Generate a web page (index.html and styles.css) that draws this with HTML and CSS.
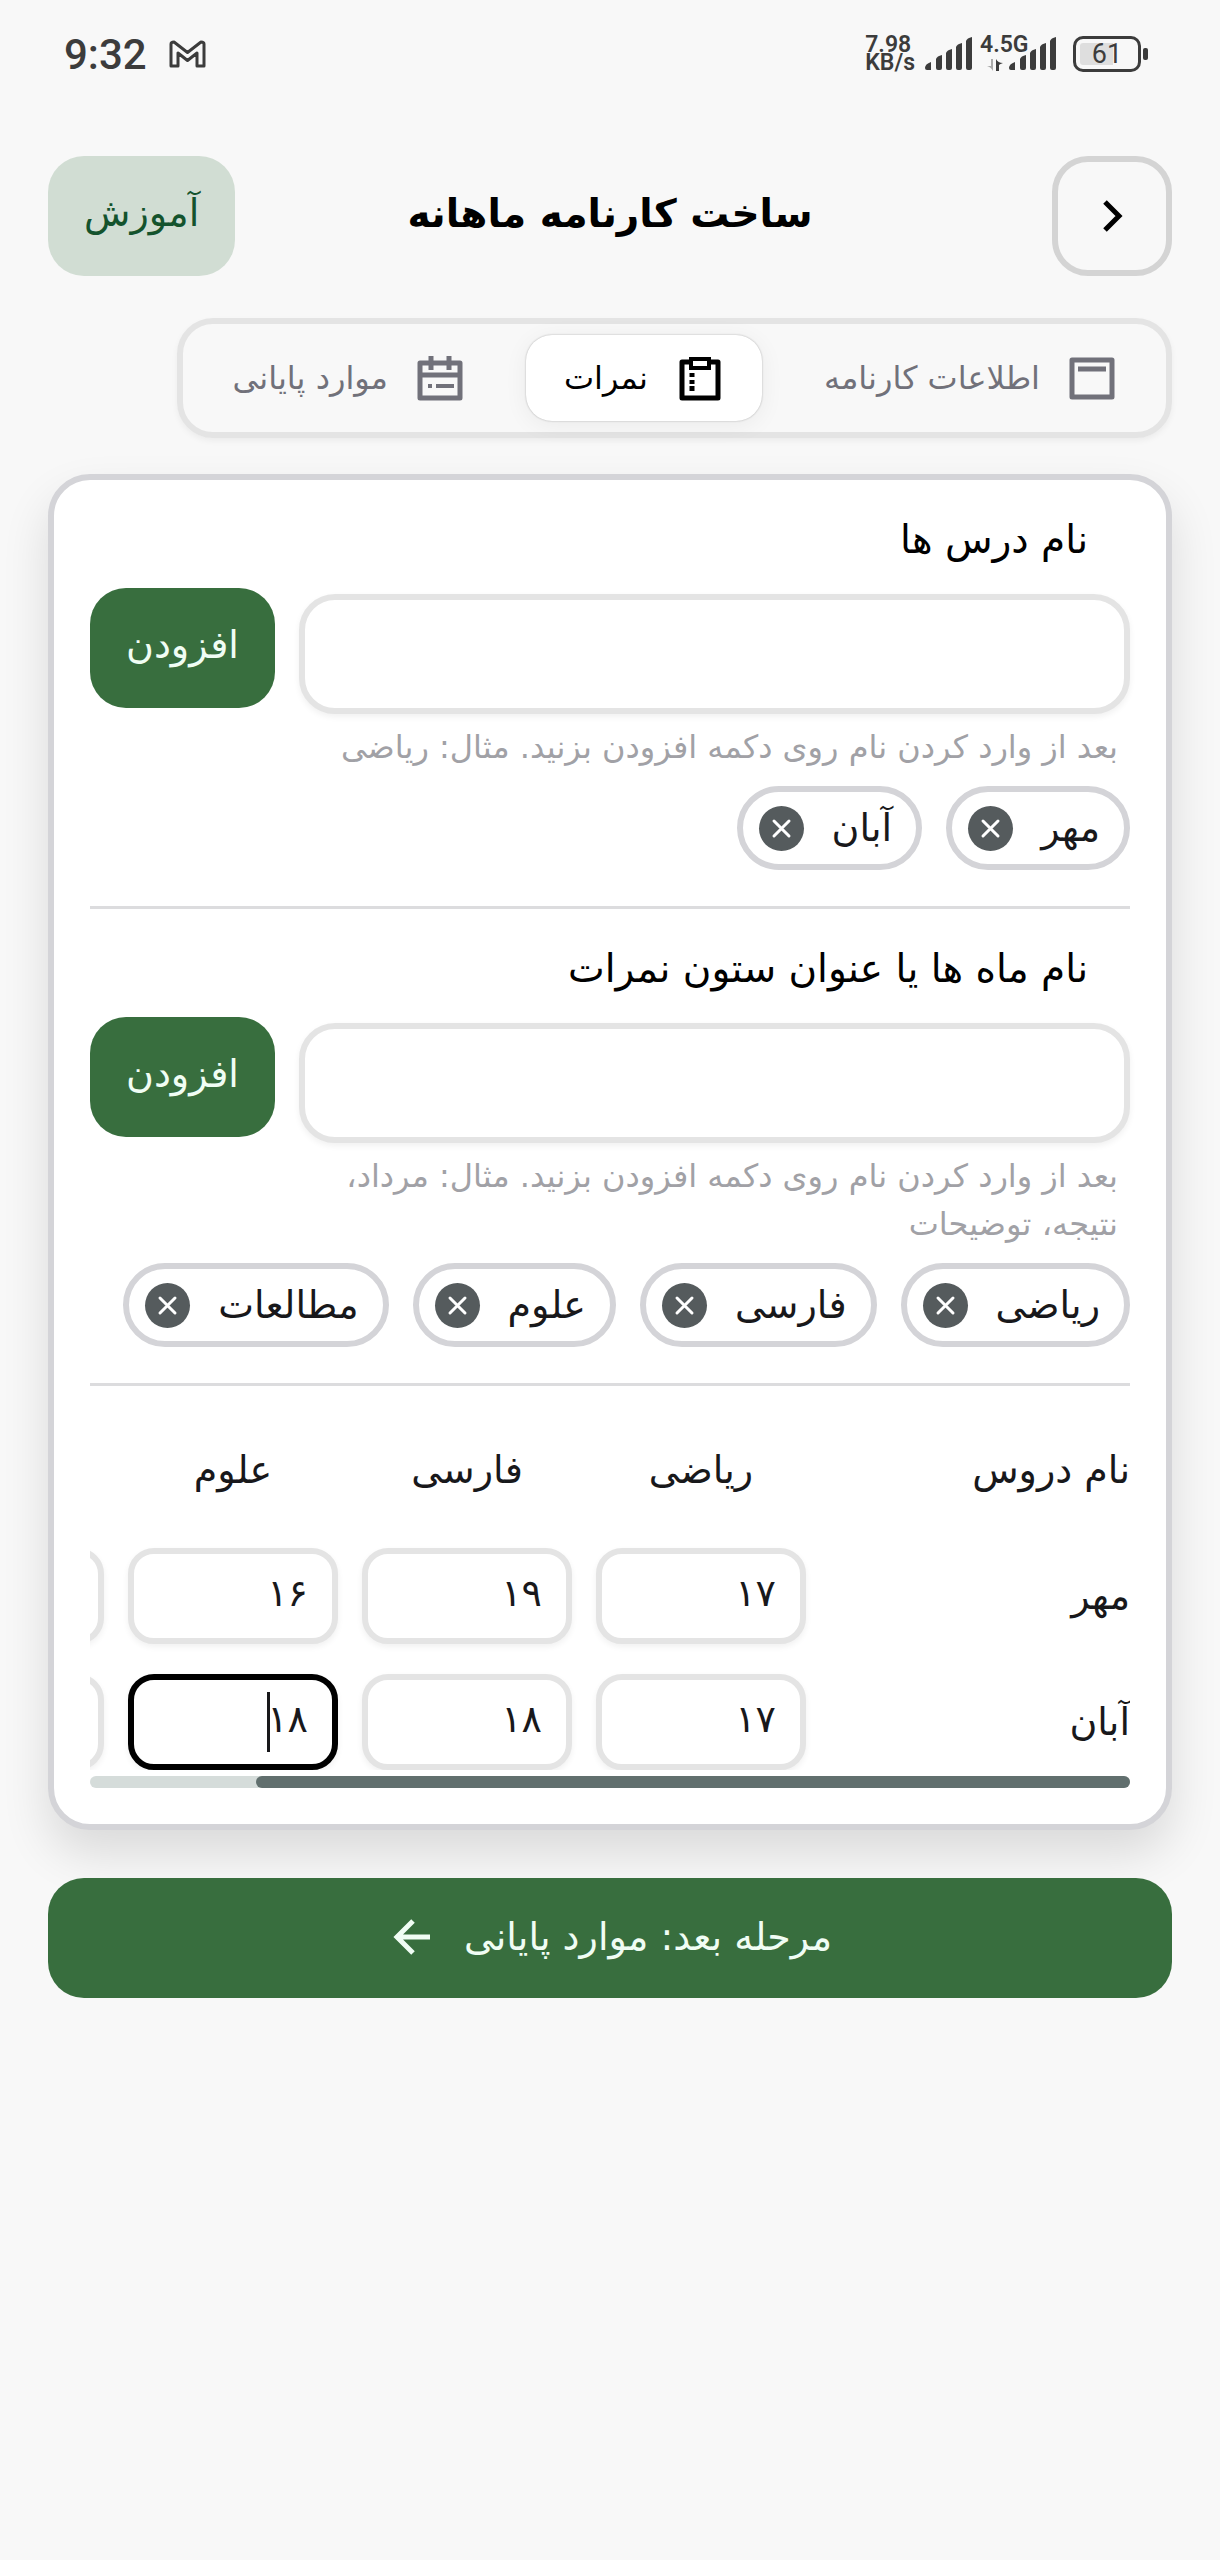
FILE: index.html
```html
<!DOCTYPE html>
<html lang="fa" dir="rtl">
<head>
    <meta charset="UTF-8">
    <meta name="viewport" content="width=device-width, initial-scale=1.0">
    <title>ساخت کارنامه ماهانه</title>
    <link rel="stylesheet" href="styles.css">
</head>
<body>
    <div class="status-bar" dir="ltr">
        <div class="status-left">
            <span class="clock">9:32</span>
            <svg class="mail-icon" viewBox="0 0 37 28" fill="none" stroke="#3c3c3c" stroke-width="3" stroke-linejoin="round">
                <path d="M2 4Q2 2 5 2L18.500 12.500 32 2Q35 2 35 4V26H28V13L18.500 20.500 9 13V26H2Z"/>
            </svg>
        </div>
        <div class="status-right">
            <div class="net-speed"><span>7.98</span><span>KB/s</span></div>
            <svg class="signal" viewBox="0 0 50 34" fill="#3c3c3c">
                <path d="M1 31q0-4 6-6v8H3q-2 0-2-2zM12 22q1-3 6-4v13q0 2-2 2h-2q-2 0-2-2zM22 16q1-3 6-4v19q0 2-2 2h-2q-2 0-2-2zM32 10q1-3 6-4v25q0 2-2 2h-2q-2 0-2-2zM42 4q1-3 6-4v31q0 2-2 2h-2q-2 0-2-2z"/>
            </svg>
            <div class="mobile-net">
                <span>4.5G</span>
                <svg class="data-arrows" viewBox="0 0 18 14"><path d="M7 1v12Q5 9 1 8h4V1z" fill="#aaa"/><path d="M10 13V1q2 4 7 4-3 1-4 2v6z" fill="#3c3c3c"/></svg>
            </div>
            <svg class="signal signal-data" viewBox="0 0 50 34" fill="#3c3c3c">
                <path d="M1 31q0-4 6-6v8H3q-2 0-2-2zM12 22q1-3 6-4v13q0 2-2 2h-2q-2 0-2-2zM22 16q1-3 6-4v19q0 2-2 2h-2q-2 0-2-2zM32 10q1-3 6-4v25q0 2-2 2h-2q-2 0-2-2zM42 4q1-3 6-4v31q0 2-2 2h-2q-2 0-2-2z"/>
            </svg>
            <div class="battery"><span>61</span></div>
        </div>
    </div>

    <header class="top-bar">
        <button class="back-btn" aria-label="بازگشت">
            <svg viewBox="0 0 48 48" fill="none" stroke="#000" stroke-width="5"><path d="M17 10l14 14-14 14"/></svg>
        </button>
        <h1>ساخت کارنامه ماهانه</h1>
        <button class="help-btn">آموزش</button>
    </header>

    <nav class="tabs">
        <button class="tab">
            <svg viewBox="0 0 48 48" fill="none" stroke="currentColor" stroke-width="5" stroke-linejoin="round"><path d="M4 6h40v37H4zM10 15h28"/></svg>
            اطلاعات کارنامه
        </button>
        <button class="tab active">
            <svg viewBox="0 0 48 48" fill="none" stroke="currentColor" stroke-width="5" stroke-linejoin="round">
                <path d="M14 8H6v36h36V8H34"/>
                <path d="M15 5h18v9H15z" stroke-width="4" stroke-linejoin="miter"/>
                <path d="M16 19v4M16 26v4M16 32v5"/>
            </svg>
            نمرات
        </button>
        <button class="tab">
            <svg viewBox="0 0 48 48" fill="none" stroke="currentColor" stroke-width="5" stroke-linejoin="round">
                <path d="M4 9h40v35H4zM4 21h40"/>
                <path d="M15 2v14M33 2v14"/>
                <path d="M12 32h4M20 32h18" stroke-width="4"/>
            </svg>
            موارد پایانی
        </button>
    </nav>

    <main class="card">
        <section class="group">
            <div class="entry">
                <label for="lesson">نام درس ها</label>
                <input class="name-input" type="text" id="lesson">
                <button class="add-btn">افزودن</button>
            </div>
            <p class="hint">بعد از وارد کردن نام روی دکمه افزودن بزنید. مثال: ریاضی</p>
            <div class="chips" id="lesson-chips"></div>
        </section>

        <section class="group">
            <div class="entry">
                <label for="month">نام ماه ها یا عنوان ستون نمرات</label>
                <input class="name-input" type="text" id="month">
                <button class="add-btn">افزودن</button>
            </div>
            <p class="hint">بعد از وارد کردن نام روی دکمه افزودن بزنید. مثال: مرداد، نتیجه، توضیحات</p>
            <div class="chips" id="column-chips"></div>
        </section>

        <div class="table-scroll">
            <table>
                <thead>
                    <tr id="head-row"><th class="row-name">نام دروس</th></tr>
                </thead>
                <tbody id="grades"></tbody>
            </table>
        </div>
        <div class="scrollbar"><div class="thumb"></div></div>
    </main>

    <button class="next-btn">
        مرحله بعد: موارد پایانی
        <svg viewBox="0 0 48 48" fill="none" stroke="currentColor" stroke-width="5"><path d="M42 24H9M25 8L9 24l16 16"/></svg>
    </button>

    <script src="script.js"></script>
</body>
</html>
```
FILE: styles.css
```css
* {
    margin: 0;
    padding: 0;
    box-sizing: border-box;
}

body {
    background: #f8f8f8;
    min-height: 100vh;
    padding: 0 48px 48px;
    color: #000;
    font-family: 'DejaVu Sans', sans-serif;
    font-size: 38px;
}

button,
input {
    font: inherit;
    color: inherit;
}

button {
    border: none;
    cursor: pointer;
}

svg {
    display: block;
    flex-shrink: 0;
}

/* phone status bar */
.status-bar {
    display: flex;
    justify-content: space-between;
    align-items: center;
    height: 108px;
    padding: 0 31px 0 16px;
    font-family: Roboto, sans-serif;
    color: #3c3c3c;
}

.status-left,
.status-right {
    display: flex;
    align-items: center;
}

.clock {
    font-size: 42px;
    font-weight: 500;
}

.mail-icon {
    width: 37px;
    height: 28px;
    margin-left: 22px;
}

.net-speed {
    display: flex;
    flex-direction: column;
    font-size: 23px;
    line-height: 18px;
    font-weight: 600;
}

.signal {
    width: 50px;
    height: 34px;
    margin-left: 9px;
}

.mobile-net {
    margin-left: 6px;
    height: 36px;
    width: 28px;
    font-size: 23px;
    line-height: 18px;
    font-weight: 600;
}

.data-arrows {
    width: 18px;
    height: 14px;
    margin: 4px 0 0 6px;
}

.signal-data {
    margin-left: 0;
}

.battery {
    position: relative;
    width: 68px;
    height: 36px;
    margin-left: 15px;
    border: 3px solid #3c3c3c;
    border-radius: 10px;
    background: linear-gradient(to right, #dedede 60%, #f8f8f8 60%);
    box-shadow: inset 0 0 0 4px #f8f8f8;
    font-size: 27px;
    line-height: 31px;
    text-align: center;
}

.battery::after {
    content: '';
    position: absolute;
    right: -10px;
    top: 9px;
    width: 5px;
    height: 12px;
    border-radius: 2px;
    background: #3c3c3c;
}

.top-bar {
    display: grid;
    grid-template-columns: 1fr auto 1fr;
    align-items: center;
    margin-top: 48px;
}

h1 {
    padding-bottom: 6px;
    font-size: 39px;
    font-weight: bold;
}

.back-btn {
    display: flex;
    justify-content: center;
    align-items: center;
    width: 120px;
    height: 120px;
    border: 6px solid #d4d4d4;
    border-radius: 36px;
    background: none;
}

.back-btn svg,
.tab svg,
.next-btn svg {
    width: 48px;
    height: 48px;
}

.help-btn,
.add-btn {
    height: 120px;
    padding: 0 36px 6px;
    border-radius: 36px;
}

.help-btn {
    justify-self: end;
    background: #d1ddd3;
    color: #14532d;
}

.add-btn {
    background: #386e3e;
    color: #f0fdf4;
}

.tabs {
    display: flex;
    align-items: center;
    gap: 24px;
    width: fit-content;
    height: 120px;
    margin-top: 42px;
    padding: 0 12px;
    border: 6px solid #e4e4e4;
    border-radius: 36px;
    box-shadow: 0 3px 6px rgba(0, 0, 0, 0.05);
}

.tab {
    display: flex;
    align-items: center;
    gap: 28px;
    height: 86px;
    padding: 0 38px;
    border-radius: 26px;
    background: none;
    color: #71717a;
    font-size: 32px;
    white-space: nowrap;
}

.tab.active {
    background: #fff;
    color: #000;
    box-shadow: 0 0 2px rgba(0, 0, 0, 0.3), 0 4px 24px rgba(0, 0, 0, 0.06);
}

.card {
    margin-top: 36px;
    padding: 36px;
    border: 6px solid #d4d4d8;
    border-radius: 42px;
    background: #fff;
    box-shadow: 0 24px 48px rgba(0, 0, 0, 0.12);
}

.group {
    padding-bottom: 36px;
    margin-bottom: 36px;
    border-bottom: 3px solid #dcdcde;
}

.entry {
    display: grid;
    grid-template-columns: 1fr auto;
    column-gap: 24px;
}

.entry label {
    grid-column: 1 / -1;
    height: 72px;
    padding-right: 42px;
    font-size: 39px;
    line-height: 48px;
}

.name-input {
    width: 100%;
    height: 120px;
    margin-top: 6px;
    padding: 0 36px;
    border: 6px solid #e4e4e4;
    border-radius: 36px;
    background: #fff;
    box-shadow: 0 3px 6px rgba(0, 0, 0, 0.06);
}

.hint {
    max-width: 828px;
    margin-top: 9px;
    padding-right: 12px;
    color: #a1a1a6;
    font-size: 32px;
    line-height: 48px;
}

.chips {
    display: flex;
    flex-wrap: wrap;
    gap: 24px;
    margin-top: 15px;
}

.chip {
    display: flex;
    align-items: center;
    gap: 28px;
    height: 84px;
    padding: 0 24px 0 16px;
    border: 6px solid #d4d4d8;
    border-radius: 42px;
    color: #18181b;
}

.chip button {
    width: 45px;
    height: 45px;
    border-radius: 50%;
    background: #555b5d;
}

.chip svg {
    width: 45px;
    height: 45px;
}

.table-scroll {
    overflow-x: auto;
    scrollbar-width: none;
}

table {
    width: 1236px;
    table-layout: fixed;
    border-collapse: collapse;
    color: #18181b;
}

th {
    height: 96px;
    padding-right: 24px;
    font-weight: normal;
}

th.row-name,
td.row-name {
    width: 300px;
    padding-right: 0;
    text-align: right;
}

td {
    padding: 30px 24px 0 0;
}

.cell {
    position: relative;
}

.grade {
    display: block;
    width: 100%;
    height: 96px;
    padding: 0 24px 6px;
    border: 6px solid #e4e4e4;
    border-radius: 26px;
    background: #fff;
    box-shadow: 0 3px 6px rgba(0, 0, 0, 0.06);
}

.grade.editing {
    border-color: #000;
    outline: none;
    caret-color: transparent;
}

.caret {
    position: absolute;
    top: 18px;
    right: 68px;
    width: 3px;
    height: 60px;
    background: #18181b;
}

.scrollbar {
    height: 12px;
    margin-top: 6px;
    border-radius: 6px;
    background: #d5dcda;
}

.thumb {
    width: 84%;
    height: 12px;
    border-radius: 6px;
    background: #616f6e;
}

.next-btn {
    display: flex;
    justify-content: center;
    align-items: center;
    gap: 28px;
    width: 100%;
    height: 120px;
    margin-top: 48px;
    padding-bottom: 3px;
    border-radius: 36px;
    background: #386e3e;
    color: #f0fdf4;
    position: relative;
}
```
FILE: script.js
```js
const rows = ['مهر', 'آبان'];
const columns = ['ریاضی', 'فارسی', 'علوم', 'مطالعات'];
const grades = [
    ['۱۷', '۱۹', '۱۶', ''],
    ['۱۷', '۱۸', '۱۸', '']
];
const editing = { row: 1, column: 2 };

function renderChips(id, names) {
    document.getElementById(id).innerHTML = names.map(name => `
        <div class="chip">
            <span>${name}</span>
            <button aria-label="حذف ${name}">
                <svg viewBox="0 0 45 45" stroke="#fff" stroke-width="3" stroke-linecap="round"><path d="M15 15l15 15M30 15L15 30"/></svg>
            </button>
        </div>`).join('');
}

function renderTable() {
    document.getElementById('head-row').innerHTML += columns.map(name => `<th>${name}</th>`).join('');
    document.getElementById('grades').innerHTML = rows.map((row, r) => `
        <tr>
            <td class="row-name">${row}</td>
            ${columns.map((column, c) => {
                const active = r === editing.row && c === editing.column;
                return `<td><div class="cell">
                    <input class="grade ${active ? 'editing' : ''}" type="text" aria-label="${row} ${column}" value="${grades[r][c]}">
                    ${active ? '<span class="caret"></span>' : ''}
                </div></td>`;
            }).join('')}
        </tr>`).join('');
}

renderChips('lesson-chips', rows);
renderChips('column-chips', columns);
renderTable();
```
